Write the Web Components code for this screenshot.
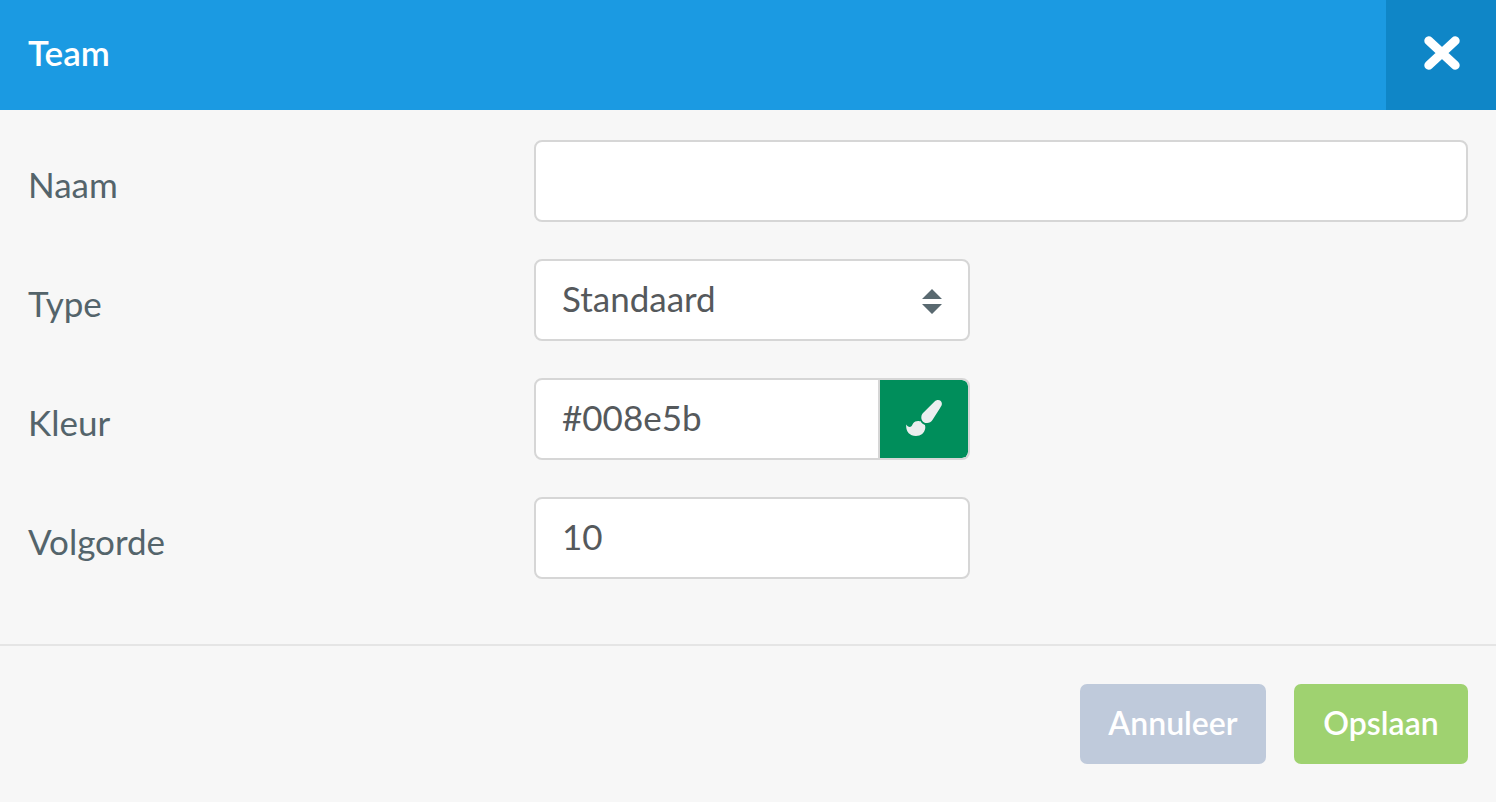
<!DOCTYPE html>
<html lang="nl">
<head>
<meta charset="utf-8">
<title>Team</title>
<style>
  body { margin: 0; background: #f7f7f7; font-family: Lato, "Open Sans", sans-serif; }
</style>
</head>
<body>
<team-dialog>
  <dialog-header slot="header">Team</dialog-header>
  <text-field name="naam" wide>Naam</text-field>
  <select-field name="type" options="Standaard">Type</select-field>
  <color-field name="kleur" value="#008e5b">Kleur</color-field>
  <text-field name="volgorde" value="10">Volgorde</text-field>
  <action-button slot="actions" kind="cancel">Annuleer</action-button>
  <action-button slot="actions" kind="save">Opslaan</action-button>
</team-dialog>
<script>
  class TeamDialog extends HTMLElement {
    constructor() {
      super();
      this.attachShadow({ mode: "open" }).innerHTML = `
        <style>
          :host { display: block; color: #54646b; background: #f7f7f7; }
          main { display: grid; gap: 37px; padding: 30px 28px 65px; }
          footer { display: flex; justify-content: flex-end; gap: 28px; padding: 38px 28px; border-top: 2px solid #e5e5e5; }
        </style>
        <slot name="header"></slot>
        <main><slot></slot></main>
        <footer><slot name="actions"></slot></footer>`;
    }
  }

  class DialogHeader extends HTMLElement {
    constructor() {
      super();
      this.attachShadow({ mode: "open" }).innerHTML = `
        <style>
          :host { display: block; }
          header { display: flex; justify-content: space-between; height: 110px; background: #1b9ae2; color: #fff; }
          h1 { margin: 0; padding: 0 28px; font-size: 35px; line-height: 104px; font-weight: 600; }
          button { display: grid; place-items: center; width: 110px; border: 0; padding: 0 0 4px 2px; background: #0f86c7; color: inherit; cursor: pointer; }
          svg { display: block; }
        </style>
        <header>
          <h1><slot></slot></h1>
          <button type="button" aria-label="Sluiten">
            <svg width="36" height="34" viewBox="0 0 36 34" fill="none" stroke="currentColor" stroke-width="9" stroke-linecap="round"><path d="M4.800 4.800 31.200 29.200M31.200 4.800 4.800 29.200"/></svg>
          </button>
        </header>`;
    }
  }

  const fieldStyle = `
    :host { display: grid; grid-template-columns: minmax(0, 506fr) minmax(0, 934fr); }
    * { box-sizing: border-box; }
    label { padding-top: 6px; font-size: 35px; line-height: 76px; }
    .box { position: relative; display: flex; width: 100%; max-width: 436px; height: 82px; border: 2px solid #d6d6d6; border-radius: 8px; background: #fff; overflow: hidden; }
    :host([wide]) .box { max-width: none; }
    input, select { flex: 1; min-width: 0; margin: 0; border: 0; padding: 0 26px 4px; background: none; color: #55595c; font: inherit; font-size: 35px; outline: 0; appearance: none; }
    .box:focus-within { border-color: #1b9ae2; }`;

  class FormField extends HTMLElement {
    constructor() {
      super();
      this.attachShadow({ mode: "open" }).innerHTML = `
        <style>${fieldStyle}${this.extraStyle()}</style>
        <label for="control"><slot></slot></label>
        <div class="box">${this.control()}</div>`;
    }
    extraStyle() { return ""; }
    control() {
      return `<input id="control" type="text" name="${this.getAttribute("name")}" value="${this.getAttribute("value") || ""}">`;
    }
  }

  class TextField extends FormField {}

  class SelectField extends FormField {
    extraStyle() {
      return `svg { position: absolute; right: 26px; top: 28px; pointer-events: none; }`;
    }
    control() {
      const options = this.getAttribute("options").split(",").map(o => `<option>${o}</option>`).join("");
      return `<select id="control" name="${this.getAttribute("name")}">${options}</select>
        <svg width="20" height="25" viewBox="0 0 20 25" fill="#596970"><path d="M10 0 20 10H0ZM0 15H20L10 25Z"/></svg>`;
    }
  }

  class ColorField extends FormField {
    extraStyle() {
      return `button { display: grid; place-items: center; width: 90px; border: 0; border-left: 2px solid #d6d6d6; border-radius: 0 6px 6px 0; padding: 0 0 2px; background: ${this.getAttribute("value")}; color: #eceeef; cursor: pointer; }
        svg { display: block; }`;
    }
    control() {
      return super.control() + `
        <button type="button" aria-label="Kies kleur">
          <svg width="36" height="36" viewBox="0 0 36 36" fill="currentColor">
            <path d="M32 0C34.600 0 36.300 2 35.800 4.500C35.600 5.700 34.800 6.800 34.100 8L26.600 19.800C25 22.200 22.800 23.300 20.300 23C17.300 22.700 15.300 20.200 15.300 17.400C15.300 15.300 16.300 13.700 17.800 12.300L28.600 1.500C29.600 .5 30.700 0 32 0Z"/>
            <path d="M.2 24.400C1.100 25.600 2.300 26.900 3.900 26.900C5.800 26.900 6.100 24.700 7.200 23.200C8.400 21.600 10.300 20.800 12.400 20.900C13.300 20.900 14 21.200 14.700 21.300C15.300 23.100 17 24.400 18.900 24.900C19.300 26 19.400 27.300 19.200 28.500C18.500 33 15 36 9.900 36C3.400 36-.4 31.200.2 24.400Z"/>
          </svg>
        </button>`;
    }
  }

  class ActionButton extends HTMLElement {
    constructor() {
      super();
      this.attachShadow({ mode: "open" }).innerHTML = `
        <style>
          :host { display: block; --fill: #9fd270; --width: 174px; }
          :host([kind="cancel"]) { --fill: #bfcadb; --width: 186px; }
          button { display: block; box-sizing: border-box; min-width: var(--width); height: 80px; margin: 0; border: 0; border-radius: 7px; padding: 0 24px 2px; background: var(--fill); color: #fff; font: inherit; font-size: 32px; line-height: 78px; font-weight: 600; cursor: pointer; }
        </style>
        <button type="button"><slot></slot></button>`;
    }
  }

  customElements.define("team-dialog", TeamDialog);
  customElements.define("dialog-header", DialogHeader);
  customElements.define("text-field", TextField);
  customElements.define("select-field", SelectField);
  customElements.define("color-field", ColorField);
  customElements.define("action-button", ActionButton);
</script>
</body>
</html>
